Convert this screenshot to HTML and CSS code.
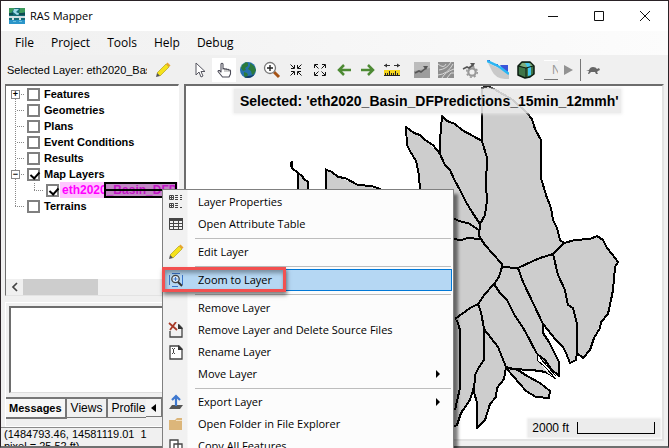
FILE: index.html
```html
<!DOCTYPE html>
<html lang="en">
<head>
<meta charset="utf-8">
<title>RAS Mapper</title>
<link rel="stylesheet" href="styles.css">
</head>
<body>
<div class="window">
  <header class="titlebar">
    <svg class="app-icon" width="16" height="16" viewBox="0 0 16 16"><path fill="#176b75" d="M0 0h16v16H0z"/><path fill="#3d9b5c" d="M0 0h6L2 5H0zM11 0h5v4l-6 2z"/><path fill="#9fd8e8" d="M5 1h5L7 4l4 2-3 1-4-3z"/><path fill="#104b50" d="M0 5h4v2H0zM10 5h6v2h-6z"/><path fill="#d3dfe3" d="M0 8h16v2H0zM3 10h2v3H3zM10 10h2v3h-2z"/><path fill="#2b95c9" d="M0 12h16v4H0z"/><path fill="#6fc2dd" d="M4 13h3v1H4zM10 13h3v1h-3z"/></svg>
    <h1 class="app-title">RAS Mapper</h1>
    <div class="caption-buttons">
      <button class="caption" aria-label="Minimize"><svg width="12" height="12" viewBox="0 0 12 12"><path d="M1 6.500h10" class="ln"/></svg></button>
      <button class="caption" aria-label="Maximize"><svg width="12" height="12" viewBox="0 0 12 12"><path d="M1.500 1.500h9v9h-9z" class="ln"/></svg></button>
      <button class="caption" aria-label="Close"><svg width="12" height="12" viewBox="0 0 12 12"><path d="M1 1l10 10M11 1L1 11" class="ln"/></svg></button>
    </div>
  </header>
  <nav class="menubar">
    <button>File</button><button>Project</button><button>Tools</button><button>Help</button><button>Debug</button>
  </nav>
  <div class="toolbar">
    <div class="selected-layer">
      <span class="selected-name">Selected Layer: eth2020_Bas</span>
      <button class="tool" aria-label="Edit layer"><svg width="16" height="16" viewBox="0 0 16 16"><path fill="#f5e21c" stroke="#a8960c" stroke-width=".6" d="M2 11L11 2l3 3-9 9z"/><path fill="#e8a62c" d="M11 2l1.500-1.500 3 3L14 5z"/><path fill="#555" d="M2 11l3 3-4 1z"/></svg></button>
    </div>
    <button class="tool" aria-label="Select"><svg width="16" height="16" viewBox="0 0 16 16"><path fill="#fff" stroke="#55555f" d="M4 1v12l3-3 2 5 2-1-2-4.500h4z"/></svg></button>
    <button class="tool active" aria-label="Pan"><svg width="16" height="16" viewBox="0 0 16 16"><path fill="#fff" stroke="#4c4c58" stroke-width="1.100" stroke-linejoin="round" d="M5 10V2q1-1.500 2 0v5q1-1 2 .3 1-1 2 .3 1-.8 2 .6 1-.5 1.500.6V12l-1.500 3H6.500L2 9.500q.3-1.500 1.600-.9z"/><path stroke="#777" stroke-width=".7" d="M9 7v3M11 7.500V10M13 8v2"/></svg></button>
    <button class="tool" aria-label="Full extent"><svg width="18" height="18" viewBox="0 0 18 18"><circle cx="9" cy="9" r="8" fill="#2471ad"/><path fill="#6fb8e0" d="M2 6q1-4 6-5-3 2-2 5-2 2-4 0z"/><path fill="#2b7a3c" d="M3 4l4-3 2 1 0 3-3 2 1 2-3 1-2-3zM11 2l4 3 2 4-2 4-2 1-1-4-3-2 2-3zM5 11l3 1 1 2-2 3-2-2z"/><path fill="#143c67" d="M5 16q6 3 11-3-3 2-7 2z"/></svg></button>
    <button class="tool" aria-label="Zoom in"><svg width="18" height="18" viewBox="0 0 18 18"><path stroke="#a65316" stroke-width="3" d="M11 11l5 5"/><circle cx="7" cy="7" r="5.500" fill="#fff" stroke="#777" stroke-width="1.300"/><path stroke="#222" stroke-width="1.400" d="M4 7h6M7 4v6"/></svg></button>
    <button class="tool" aria-label="Fixed zoom in"><svg width="12" height="12" viewBox="0 0 12 12"><path class="ln" d="M.5.500L4 4M11.500.500L8 4M.5 11.500L4 8M11.500 11.500L8 8M4.500 1v3.500H1M7.500 1v3.500H11M4.500 11V7.500H1M7.500 11V7.500H11"/></svg></button>
    <button class="tool" aria-label="Fixed zoom out"><svg width="12" height="12" viewBox="0 0 12 12"><path class="ln" d="M1 1l3.500 3.500M11 1L7.500 4.500M1 11l3.500-3.500M11 11L7.500 7.500M.5 4V.500H4M8 .5h3.500V4M.5 8v3.500H4M8 11.500h3.500V8"/></svg></button>
    <button class="tool" aria-label="Previous view"><svg width="14" height="14" viewBox="0 0 14 14"><path fill="none" stroke="#4d8a34" stroke-width="2.500" d="M14 7H2M7 2L2 7l5 5"/></svg></button>
    <button class="tool" aria-label="Next view"><svg width="14" height="14" viewBox="0 0 14 14"><path fill="none" stroke="#4d8a34" stroke-width="2.500" d="M0 7h12M7 2l5 5-5 5"/></svg></button>
    <button class="tool" aria-label="Measure"><svg width="16" height="14" viewBox="0 0 16 14"><path stroke="#333" d="M0 2.500h6M10 2.500h6"/><path fill="#333" d="M0 2.500L3 .5v4zM16 2.500L13 .5v4z"/><path fill="#f5d51d" d="M0 7h16v6H0z"/><path stroke="#222" d="M0 12.500h16M1.500 10v2M3.500 10v2M5.500 8v4M7.500 10v2M9.500 10v2M11.500 8v4M13.500 10v2"/></svg></button>
    <button class="tool group" aria-label="Velocity vectors"><svg width="16" height="16" viewBox="0 0 16 16"><path fill="#bcbcbc" d="M0 0h16v16H0z"/><path fill="#9c9c9c" d="M0 9l16-3v10H0z"/><path fill="none" stroke="#555" stroke-width="1.600" d="M1 11l4-2 2 1 5-4"/><path fill="#555" d="M9 4h5l-2 4z"/></svg></button>
    <button class="tool" aria-label="Particle tracing"><svg width="16" height="16" viewBox="0 0 16 16"><path fill="#8e8e8e" d="M0 0h16v16H0z"/><path fill="none" stroke="#d8d8d8" d="M0 2q6 5 8 0M1 8q8-1 12-8M0 13q10-1 15-11M4 16q3-6 12-9M9 16l4-5 3 0"/></svg></button>
    <button class="tool" aria-label="Vector settings"><svg width="16" height="16" viewBox="0 0 16 16"><circle cx="10" cy="10" r="3.700" fill="none" stroke="#999" stroke-width="2.200"/><circle cx="10" cy="10" r="5.300" fill="none" stroke="#999" stroke-dasharray="2 2.160" stroke-width="1.500"/><path fill="none" stroke="#555" stroke-width="1.600" d="M1 7l4-2 2 1 4-3"/><path fill="#555" d="M8 1h5l-2 4z"/></svg></button>
    <button class="tool wide" aria-label="Profile"><svg width="22" height="19" viewBox="0 0 22 19"><path fill="#999" d="M1 3l21 10v6h-4Q8 18 5 11z" opacity=".45"/><path fill="#3b55d9" d="M0 0h3v2H0zM5 4h6v3zM13 5h8v7l-5-2z"/><path fill="none" stroke="#2bb6f2" stroke-width="2.500" d="M0 1l9 4 5 3 8 6"/></svg></button>
    <button class="tool" aria-label="3D viewer"><svg width="18" height="18" viewBox="0 0 18 18"><path fill="#3f7548" stroke="#0b1a10" stroke-width="1.500" stroke-linejoin="round" d="M5 1h8l4 4v8l-4 3-5 1-7-3V5z"/><path fill="#7fae7c" d="M5 2l8 0 3 3-7 2-6-2z"/><path fill="#42c7ee" d="M8 2h4l2 4v8l-3 1V7z"/><path fill="none" stroke="#0b1a10" d="M1 5l8 2v10M9 7l7-2"/></svg></button>
    <div class="animation">
      <div class="anim-name">N</div>
      <button class="tool play" aria-label="Play"><svg width="10" height="12" viewBox="0 0 10 12"><path fill="#929292" d="M0 1l9 5-9 5z"/></svg></button>
      <button class="tool speed" aria-label="Speed"><svg width="14" height="8" viewBox="0 0 14 8"><path fill="#666" d="M0 5l3-1q1-3 4-3t4 2l2-1 1 2-2 1-1 1 1 2h-2L9 6H5L3 8H2l1-3z"/></svg></button>
    </div>
  </div>

  <main class="workspace">
    <section class="side">
      <div class="tree-panel">
        <ul class="tree">
          <li class="first"><span class="twig"><span class="expander">+</span></span><label><input type="checkbox">Features</label></li>
          <li><span class="twig"></span><label><input type="checkbox">Geometries</label></li>
          <li><span class="twig"></span><label><input type="checkbox">Plans</label></li>
          <li><span class="twig"></span><label><input type="checkbox">Event Conditions</label></li>
          <li><span class="twig"></span><label><input type="checkbox">Results</label></li>
          <li><span class="twig"><span class="expander">−</span></span><label><input type="checkbox" checked>Map Layers</label></li>
          <li class="child"><span class="twig"></span><span class="subtwig"></span><label><input type="checkbox" checked><span class="layer">eth2020_Basin_DFP</span></label><span class="swatch"></span></li>
          <li class="last"><span class="twig"></span><label><input type="checkbox">Terrains</label></li>
        </ul>
        <div class="hscroll">
          <button aria-label="Scroll left"><svg width="8" height="10" viewBox="0 0 8 10"><path fill="none" stroke="#444" stroke-width="1.700" d="M6 1L2 5l4 4"/></svg></button>
          <span class="thumb"></span>
        </div>
      </div>
      <div class="messages-panel">
        <div class="messages"></div>
        <div class="tabs">
          <button class="tab current">Messages</button><button class="tab">Views</button><button class="tab profile">Profile</button><button class="tab-scroll" aria-label="Previous tab"><svg width="5" height="8" viewBox="0 0 5 8"><path d="M5 0v8L0 4z"/></svg></button><button class="tab-scroll" aria-label="Next tab"></button>
        </div>
      </div>
      <p class="status">(1484793.46, 14581119.01&nbsp; 1 pixel = 25.52 ft)</p>
    </section>
    <section class="map">
      <svg class="basins" viewBox="186 86 476 354" preserveAspectRatio="xMinYMin slice">
        <path class="fill" d="M406 127L414 133 425 140 440 154 442 116 455 124 480 140 482 141V88L488 86 494 89 513 100 527 113 535 125 541 140V178L546 195 551 208 553 220 557 228 560 240 564 243 575 240 590 240 597 236 603 240 612 254 618 262 615 270 611 300 608 314 600 324 590 350 583 358 577 353 576 360 570 363 563 347 543 325 543 333 549 342 559 362V376L537 355 538 361 551 376 540 370 520 370 540 383 550 391 549 398 536 397 520 385 507 369 504 379 497 388 496 397 490 404 485 420 477 428V403L474 392 470 400 461 413 457 425 452 428 430 400 420 190 416 161 407 145z"/>
        <path class="fill" d="M298 173l10 9v20h-10zM326 169l12 8 20 8 23 4v20h-55z"/>
        <g class="edges">
          <path d="M292 161v7l6 5v20M291 162v5M298 173l4 3 2 3 4 3v10M325 169l2 1 5 2 6 5 7 1 13 7 13 1 10 3M326 170v20"/>
          <path d="M420 190L419 175 416 161 410 151 407 145 406 127 414 133 420 135 425 140 433 145 440 154 445 165 450 170 454 179 460 190 466 202 472 212 480 224"/>
          <path d="M440 154V140L442 116 447 121 455 124 462 130 473 136 482 141V88L488 86 494 89 513 100 527 113 532 119 535 129 541 140V178L546 195 551 208 553 220 557 228 560 240 564 243"/>
          <path d="M482 141L487 158 486 185 487 200 485 215 480 224 479 236 485 245 493 254 502 264V267L499 277 494 284 485 294 478 304 470 308 455 319"/>
          <path d="M452 218L462 222 468 223 479 230M452 239L462 240 467 238 480 239M502 267L518 268 533 261 540 258 553 254 564 243 575 240 590 239 597 236 603 240 607 248 612 254 618 262 615 267 613 290 611 300 608 314 601 322 600 328 594 338 590 350 583 358 577 353 576 360 570 363 566 353 563 347 556 340 543 324 543 333 549 342 554 352 559 362V376L551 369 545 360 537 354"/>
          <path d="M553 254L558 275 565 290 568 305 573 308 577 324V353M518 268L523 282 534 305 543 324M494 284L500 293 507 300 514 314 525 331 537 354M546 372L532 370 512 369 506 367 498 347 491 338 484 329 481 312 478 304"/>
          <path class="thin" d="M537 354V360L545 367 556 379 545 372M540 358L556 376"/>
          <path d="M484 329V360L479 367 475 375 474 392 477 403V428L485 420 490 404 496 397 497 388 504 379 506 367 518 370 527 376 540 383 550 391 549 398 536 397 526 391 507 369M457 320L460 330V388L455 410M474 387L470 400 461 413 457 425 452 427"/>
        </g>
      </svg>
      <div class="map-title">Selected: 'eth2020_Basin_DFPredictions_15min_12mmh'</div>
      <div class="scale"><span>2000 ft</span><span class="scale-bar"></span></div>
    </section>
  </main>
</div>

<div class="context-menu" role="menu">
  <button role="menuitem"><svg width="16" height="16" viewBox="0 0 16 16"><path fill="none" stroke="#444" d="M1.500 1.500h4v4h-4zM1.500 9.500h4v4h-4zM2 3.500h3M3.500 2v3M2 11.500h3M3.500 10v3"/><path stroke="#444" stroke-dasharray="3 1" d="M7 1.500h4M7 3.500h4M7 5.500h4M7 9.500h4M7 11.500h4M7 13.500h4"/><path stroke="#444" d="M12 1.500h2M12 3.500h2M12 5.500h2M12 13.500h2"/></svg><span>Layer Properties</span></button>
  <button role="menuitem"><svg width="16" height="16" viewBox="0 0 16 16"><path fill="#444" d="M1 2h14v3H1z"/><path fill="none" stroke="#444" d="M1.500 2.500h13v11h-13zM1 7.500h14M1 10.500h14M5.500 3v11M10.500 3v11"/></svg><span>Open Attribute Table</span></button>
  <hr>
  <button role="menuitem"><svg width="16" height="16" viewBox="0 0 16 16"><path fill="#f5e21c" stroke="#a8960c" stroke-width=".6" d="M2 11L11 2l3 3-9 9z"/><path fill="#e8a62c" d="M11 2l1.500-1.500 3 3L14 5z"/><path fill="#555" d="M2 11l3 3-4 1z"/></svg><span>Edit Layer</span></button>
  <hr>
  <button role="menuitem" class="hot"><svg width="16" height="16" viewBox="0 0 16 16"><path fill="none" stroke="#3b74c9" d="M1.500 3v10M14.500 3v10M4 1.500h8M4 14.500h6"/><circle cx="7.500" cy="7" r="3.700" fill="#dcecfa" stroke="#444" stroke-width="1.300"/><path stroke="#3b74c9" d="M5.500 7h4M7.500 5v4"/><path stroke="#333" stroke-width="2" d="M10 10l4 4"/></svg><span>Zoom to Layer</span></button>
  <hr>
  <button role="menuitem"><i></i><span>Remove Layer</span></button>
  <button role="menuitem"><svg width="16" height="16" viewBox="0 0 16 16"><path fill="none" stroke="#444" stroke-width="1.300" d="M2 9v6h12V6l-3-3h-1"/><path fill="#333" d="M10 2l5 5h-5z"/><path stroke="#a83a28" stroke-width="1.800" d="M1 1l8 7M8 0L2 8"/></svg><span>Remove Layer and Delete Source Files</span></button>
  <button role="menuitem"><svg width="16" height="16" viewBox="0 0 16 16"><path fill="#fff" stroke="#444" stroke-width="1.300" d="M2 2h9l3 3v10H2z"/><path fill="#333" d="M10 1l5 5h-5z"/><path fill="none" stroke="#444" d="M4 4.500h1M6 4.500h1M5.500 5v4M4 9.500h1M6 9.500h1"/></svg><span>Rename Layer</span></button>
  <button role="menuitem"><i></i><span>Move Layer</span><svg class="more" width="4" height="8" viewBox="0 0 4 8"><path d="M0 0l4 4-4 4z"/></svg></button>
  <hr>
  <button role="menuitem"><svg width="16" height="16" viewBox="0 0 16 16"><path fill="#555" d="M4 11h11l-3 4H1z"/><path fill="none" stroke="#3e78cf" stroke-width="2.200" d="M8 12V3M4 6l4-4 4 4"/></svg><span>Export Layer</span><svg class="more" width="4" height="8" viewBox="0 0 4 8"><path d="M0 0l4 4-4 4z"/></svg></button>
  <button role="menuitem"><svg width="16" height="16" viewBox="0 0 16 16"><path fill="#dcb67a" d="M1 4h6l2-2h5v12H1z"/><path stroke="#f2dfbd" d="M8 4.500h6"/></svg><span>Open Folder in File Explorer</span></button>
  <button role="menuitem"><svg width="16" height="16" viewBox="0 0 16 16"><path fill="#fff" stroke="#444" stroke-width="1.300" d="M2 2h8v10H2zM6 6h8v9H6z"/></svg><span>Copy All Features</span></button>
</div>
<div class="callout"></div>
</body>
</html>
```
FILE: styles.css
```css
* { box-sizing: border-box; }
html, body { height: 100%; }
body {
  margin: 0;
  overflow: hidden;
  position: relative;
  background: #6b6b6b;
  color: #000;
  font: 11px/16px "Open Sans", "Noto Sans", sans-serif;
}
button {
  border: 0;
  padding: 0;
  background: none;
  font: inherit;
  color: inherit;
}
svg { display: block; flex: none; }
.ln { fill: none; stroke: #111; stroke-width: 1; }

.window {
  height: 100vh;
  display: flex;
  flex-direction: column;
  border: 1px solid #2a2226;
  border-bottom: 2px solid #6f6f6f;
  background: #f0f0f0;
}

/* Title bar and menus */
.titlebar {
  flex: none;
  height: 30px;
  display: flex;
  align-items: center;
  padding-left: 8px;
  background: #fff;
}
.app-title { margin: 0 auto 0 5px; font-size: 11px; font-weight: 400; }
.caption-buttons { display: flex; }
.caption { width: 46px; height: 30px; display: grid; place-items: center; }
.menubar {
  flex: none;
  height: 24px;
  display: flex;
  align-items: center;
  gap: 17px;
  padding-left: 14px;
  background: linear-gradient(90deg, #f0f0f0, #fcfcfc);
  font-size: 12px;
}

/* Toolbar */
.toolbar {
  flex: none;
  height: 29px;
  display: flex;
  align-items: center;
}
.selected-layer {
  width: 187px;
  display: flex;
  align-items: center;
  padding-left: 6px;
  font: 11px/16px "Liberation Sans", sans-serif;
}
.selected-name { width: 140px; margin-right: 4px; overflow: hidden; white-space: nowrap; }
.tool { width: 24px; height: 24px; flex: none; display: grid; place-items: center; }
.tool.active { background: #fff; }
.tool.group { margin-left: 6px; }
.tool.wide { width: 32px; }
.animation { display: flex; align-items: center; height: 22px; margin-left: 6px; overflow: hidden; }
.anim-name {
  width: 14px;
  height: 20px;
  padding-left: 8px;
  overflow: hidden;
  border-top: 1px solid #fff;
  border-bottom: 1px solid #777;
  font: 12px/18px "Liberation Sans", sans-serif;
  color: #999;
}
.play { width: 22px; }
.speed { border-left: 1px solid #777; }

/* Panels */
.workspace {
  flex: 1;
  min-height: 0;
  display: grid;
  grid-template-columns: 174px 1fr;
  gap: 5px;
  padding: 0 4px;
}
.side { display: flex; flex-direction: column; min-width: 0; min-height: 0; }
.tree-panel {
  flex: 7 1 0;
  min-height: 0;
  display: flex;
  flex-direction: column;
  overflow: hidden;
  background: #fff;
  border: 2px solid #6d6d6d;
  border-width: 2px 1px 1px 1px;
  border-right-color: #fff;
  border-bottom-color: #e3e3e3;
}
.tree {
  flex: 1;
  margin: 0;
  padding: 0;
  list-style: none;
  font: bold 11px/16px "Liberation Sans", sans-serif;
}
.tree li { position: relative; height: 16px; display: flex; white-space: nowrap; }
.tree label { display: flex; align-items: center; gap: 4px; }
.twig {
  width: 21px;
  flex: none;
  display: flex;
  align-items: center;
  padding-left: 5px;
  background:
    repeating-linear-gradient(0deg, #888 0 1px, #fff 1px 2px) 9px 0 / 1px 100% no-repeat,
    repeating-linear-gradient(90deg, #888 0 1px, #fff 1px 2px) 9px 8px / 9px 1px no-repeat;
}
.first .twig { background-position: 9px 8px; }
.last .twig { background-size: 1px 8px, 9px 1px; }
.child .twig { background-size: 1px 100%, 0 0; }
.subtwig {
  width: 19px;
  flex: none;
  background:
    repeating-linear-gradient(0deg, #888 0 1px, #fff 1px 2px) 7px 0 / 1px 8px no-repeat,
    repeating-linear-gradient(90deg, #888 0 1px, #fff 1px 2px) 7px 8px / 9px 1px no-repeat;
}
.expander {
  width: 9px;
  height: 9px;
  border: 1px solid #888;
  background: #fff;
  font: bold 9px/7px "Liberation Sans", sans-serif;
  text-align: center;
}
.tree input {
  appearance: none;
  flex: none;
  width: 13px;
  height: 13px;
  margin: 0;
  border: 2px solid #808080;
  background: #fff;
}
.tree input:checked::after {
  content: "";
  display: block;
  width: 4px;
  height: 7px;
  margin: 0 3px;
  border: solid #000;
  border-width: 0 2px 2px 0;
  transform: rotate(42deg);
}
.child label { gap: 1px; }
.layer { padding: 0 2px; background: #ffc4ff; color: #f0f; font-size: 12px; }
.swatch {
  position: absolute;
  left: 98px;
  right: 1px;
  top: 0;
  height: 16px;
  border: 2px solid #000;
  background: linear-gradient(#000, #000) 0 5px / 100% 2px no-repeat, rgba(110, 50, 120, .42);
}
.hscroll { flex: none; height: 16px; display: flex; background: #f0f0f0; }
.hscroll button { width: 17px; display: grid; place-items: center; }
.thumb { width: 75px; background: #cdcdcd; }
.messages-panel {
  flex: 4 1 0;
  min-height: 0;
  display: flex;
  flex-direction: column;
  margin-top: 6px;
  padding: 3px 0 0 3px;
  border: 1px solid #fff;
}
.messages { flex: 1; background: #fff; border: 2px solid #6d6d6d; border-right: 0; border-bottom: 1px solid #ddd; }
.tabs {
  flex: none;
  display: flex;
  height: 29px;
  margin: 4px 0 0 -3px;
  border-top: 2px solid #777;
  font: 12px/18px "Liberation Sans", sans-serif;
  overflow: hidden;
}
.tab { height: 19px; padding: 0 4px; border: solid #777; border-width: 0 2px 1px 0; white-space: nowrap; }
.tab.current { height: 20px; padding: 0 3px; border-bottom-width: 2px; background: #f7f7f7; font-weight: bold; font-size: 11px; }
.tab.profile { padding: 0 1px 0 3px; border-right: 0; }
.tab-scroll { flex: none; width: 16px; height: 18px; display: grid; place-items: center; border: solid #777; border-width: 0 1px 1px 0; background: #f4f4f4; }
.status {
  flex: none;
  height: 19px;
  margin: 0 0 0 -4px;
  padding: 0 24px 0 3px;
  overflow: hidden;
  border-top: 1px solid #8a8a8a;
  font: 11px/12px "Liberation Sans", sans-serif;
}

/* Map */
.map {
  position: relative;
  min-width: 0;
  margin-bottom: 5px;
  overflow: hidden;
  background: #fff;
  border: 2px solid #6d6d6d;
  border-right-color: #e3e3e3;
  border-bottom-color: #e3e3e3;
}
.basins { width: 100%; height: 100%; shape-rendering: crispEdges; }
.fill { fill: #cdcdcd; }
.edges path { fill: none; stroke: #000; stroke-width: 2; stroke-linejoin: round; }
.edges .thin { stroke-width: 1; }
.map-title {
  position: absolute;
  top: 3px;
  left: 48px;
  padding: 0 2px 0 6px;
  background: rgba(233, 233, 233, .88);
  box-shadow: 0 0 3px 1px rgba(233, 233, 233, .88);
  font: bold 14px/24px "Liberation Sans", sans-serif;
  white-space: nowrap;
}
.scale {
  position: absolute;
  right: 2px;
  bottom: 2px;
  display: flex;
  align-items: center;
  gap: 8px;
  padding: 0 5px 0 4px;
  background: #ececec;
  box-shadow: 0 0 2px 1px #ececec;
  font: 12px/18px "Liberation Sans", sans-serif;
}
.scale-bar { width: 78px; height: 12px; border: 1px solid #000; border-top: 0; }

/* Context menu */
.context-menu {
  position: absolute;
  left: 162px;
  top: 189px;
  width: 292px;
  padding: 1px;
  border: 1px solid #808080;
  background: linear-gradient(90deg, #f1f1f1 0 24px, #fcfcfc 25px);
  box-shadow: 4px 5px 3px rgba(0, 0, 0, .5);
}
.context-menu button {
  width: 100%;
  height: 22px;
  display: flex;
  align-items: center;
  padding-left: 3px;
  border: 1px solid transparent;
  text-align: left;
}
.context-menu button > svg:first-child, .context-menu i { width: 16px; flex: none; }
.context-menu span { flex: 1; margin-left: 14px; white-space: nowrap; }
.context-menu .hot { border-color: #0078d7; background: #b5d7f3; }
.context-menu hr { height: 1px; margin: 3px 1px 2px 31px; border: 0; background: #bdbdbd; }
.context-menu .more { margin-right: 11px; }
.callout {
  position: absolute;
  left: 162px;
  top: 267px;
  width: 124px;
  height: 25px;
  border: 3px solid #f25050;
  box-shadow: 1px 3px 4px rgba(0, 0, 0, .5), inset 1px 3px 4px rgba(0, 0, 0, .35);
}
```
